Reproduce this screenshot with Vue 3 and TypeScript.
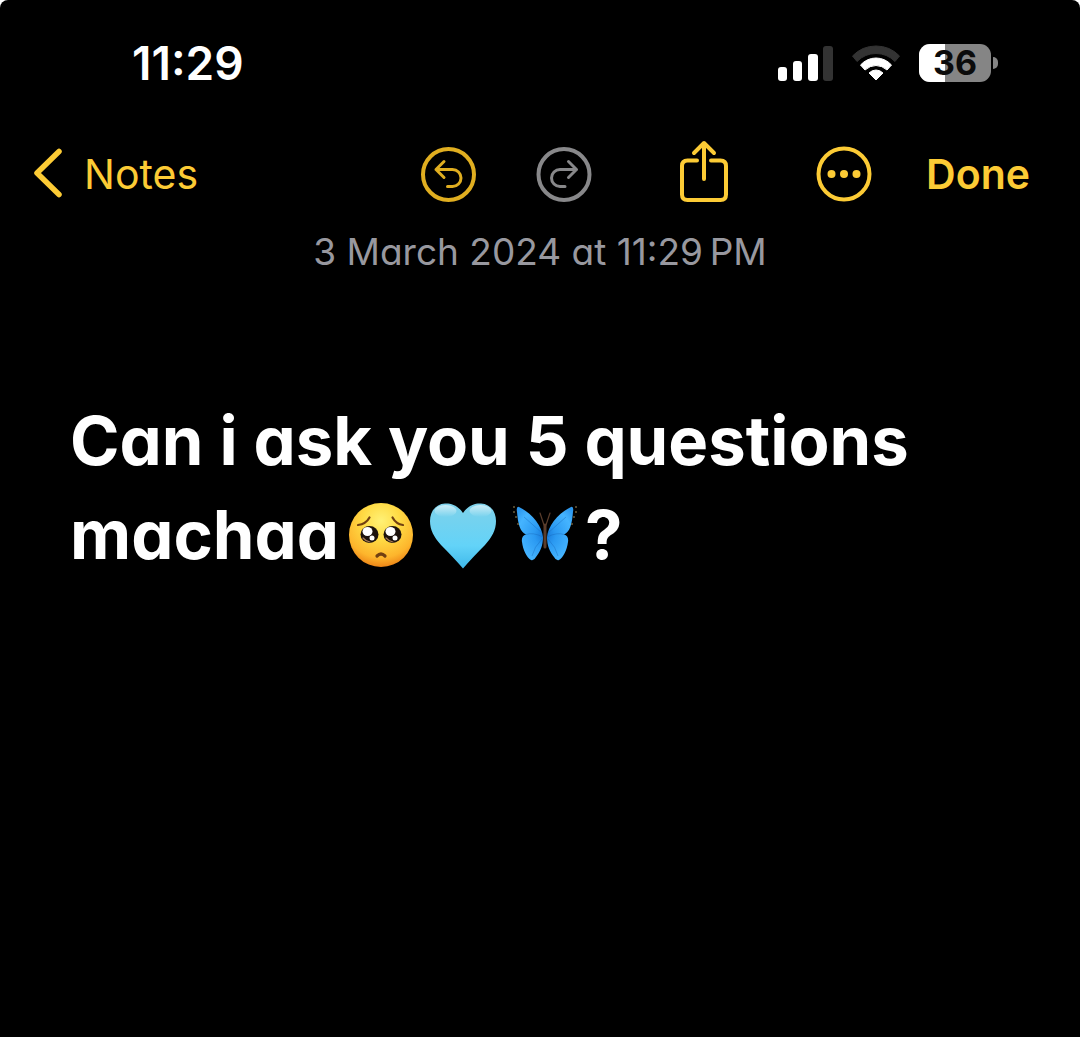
<script setup lang="ts">
import { ref } from 'vue'

const time = ref('11:29')
const battery = ref(36)
const edited = ref('3 March 2024 at 11:29\u2009PM')
</script>

<template>
  <main class="screen">
    <header class="status">
      <time class="clock">{{ time }}</time>
      <div class="indicators">
        <svg class="signal" width="56" height="38" viewBox="0 0 56 38" role="img" aria-label="Signal: 3 of 4 bars">
          <g fill="#fff">
            <rect x="1" y="23" width="9" height="14" rx="3" />
            <rect x="16" y="17" width="9" height="20" rx="3" />
            <rect x="31" y="10" width="10" height="27" rx="3" />
          </g>
          <rect x="46" y="2" width="10" height="35" rx="3" fill="#333" />
        </svg>
        <svg class="wifi" width="48" height="38" viewBox="0 0 48 38" role="img" aria-label="Wi-Fi">
          <path d="M0.500 12Q10 2 24 2T47.500 12L43 17.500Q35 9.500 24 9.500T5 17.500Z" fill="#333" stroke="#333" stroke-linejoin="round" />
          <path d="M8.500 21Q15 14 24 14T39.500 21L35 26Q30 21.500 24 21.500T13 26Z" fill="#fff" stroke="#fff" stroke-linejoin="round" />
          <path d="M17 29Q20 26 24 26T31 29L24 36Z" fill="#fff" stroke="#fff" stroke-linejoin="round" />
        </svg>
        <div class="battery" role="img" :aria-label="`Battery ${battery} percent`">
          <div class="cell">
            <div class="charge" :style="{ width: battery + '%' }"></div>
            <span class="level">{{ battery }}</span>
          </div>
          <div class="nub"></div>
        </div>
      </div>
    </header>

    <nav class="toolbar">
      <button class="back" type="button">
        <svg width="36" height="56" viewBox="0 0 36 56" aria-hidden="true">
          <path d="M27 5.500L5 27L27 48.500" fill="none" stroke="currentColor" stroke-width="5.500" stroke-linecap="round" stroke-linejoin="round" />
        </svg>
        <span>Notes</span>
      </button>
      <div class="actions">
        <div class="history">
          <button class="undo" type="button" aria-label="Undo">
            <svg class="line" width="56" height="56" viewBox="0 0 56 56">
              <circle cx="28.500" cy="28.500" r="25.500" />
              <path d="M24 15.500L16 23.500L24 31.500M16 23.500H32.500A8.500 8.500 0 0 1 32.500 40.500H27.500" stroke-width="3" />
            </svg>
          </button>
          <button class="redo" type="button" aria-label="Redo">
            <svg class="line" width="56" height="56" viewBox="0 0 56 56">
              <circle cx="28" cy="28.500" r="25.500" />
              <path d="M32.500 15.500L40.500 23.500L32.500 31.500M40.500 23.500H24A8.500 8.500 0 0 0 24 40.500H29" stroke-width="3" />
            </svg>
          </button>
        </div>
        <button type="button" aria-label="Share">
          <svg class="line" width="50" height="68" viewBox="0 0 50 68">
            <path d="M18 20.500H8.500Q3 20.500 3 26V54.500Q3 60 8.500 60H41.500Q47 60 47 54.500V26Q47 20.500 41.500 20.500H32M25 39V3M15 13L25 3L35 13" />
          </svg>
        </button>
        <div class="finish">
          <button type="button" aria-label="More">
            <svg class="line" width="56" height="56" viewBox="0 0 56 56">
              <circle cx="28" cy="28" r="25.500" />
              <g fill="currentColor" stroke="none">
                <circle cx="15.500" cy="28" r="4" />
                <circle cx="28" cy="28" r="4" />
                <circle cx="40.500" cy="28" r="4" />
              </g>
            </svg>
          </button>
          <button class="done" type="button">Done</button>
        </div>
      </div>
    </nav>

    <p class="date">{{ edited }}</p>

    <article class="note">
      <h1>
        Can i ask you 5 questions<br />machaa<svg class="emoji" viewBox="0 0 80 72" role="img" aria-label="Pleading face">
          <defs>
            <radialGradient id="skin" cx=".5" cy=".28" r=".72">
              <stop offset="0" stop-color="#fff176" />
              <stop offset=".4" stop-color="#ffdb45" />
              <stop offset=".8" stop-color="#fdb52c" />
              <stop offset="1" stop-color="#ed8517" />
            </radialGradient>
          </defs>
          <circle cx="41" cy="36" r="32" fill="url(#skin)" />
          <g fill="none" stroke="#714012" stroke-width="2.200" stroke-linecap="round">
            <path d="M18 26Q26 25 29.500 18.500" />
            <path d="M52.500 18.500Q56 25 63 26" />
            <path d="M37 57Q41 53 45 57" stroke-width="3.200" />
          </g>
          <g fill="#1c120c">
            <ellipse cx="29.500" cy="35.500" rx="9" ry="8.500" />
            <ellipse cx="52.500" cy="35.500" rx="9" ry="8.500" />
          </g>
          <g fill="#fff">
            <ellipse cx="27.500" cy="32.500" rx="5" ry="4.500" />
            <ellipse cx="50.500" cy="32.500" rx="5" ry="4.500" />
            <circle cx="32" cy="39" r="2.500" />
            <circle cx="55" cy="39" r="2.500" />
          </g>
          <g fill="none" stroke="#a77b58" stroke-width="1.200" stroke-linecap="round">
            <path d="M23 39Q26 42.500 30 43" />
            <path d="M46 39Q49 42.500 53 43" />
          </g>
        </svg><svg class="emoji" viewBox="0 0 80 72" role="img" aria-label="Light blue heart">
          <defs>
            <linearGradient id="heart" x1="0" y1="0" x2="0" y2="1">
              <stop offset="0" stop-color="#7fd2ea" />
              <stop offset=".3" stop-color="#72d2f0" />
              <stop offset=".65" stop-color="#63d3f8" />
              <stop offset="1" stop-color="#3fb9ea" />
            </linearGradient>
            <linearGradient id="gloss" x1="0" y1="0" x2="0" y2="1">
              <stop offset="0" stop-color="#fff" stop-opacity=".6" />
              <stop offset="1" stop-color="#fff" stop-opacity="0" />
            </linearGradient>
          </defs>
          <path d="M41 14C36 6 28 4 23 4.500C14 5 8 12 8 22C8 31 12 38 19 46Q32 59 41 69.500Q50 59 63 46C70 38 74 31 74 22C74 12 68 5 59 4.500C54 4 46 6 41 14Z" fill="url(#heart)" />
          <g fill="url(#gloss)">
            <ellipse cx="23.500" cy="12" rx="11" ry="6" />
            <ellipse cx="58.500" cy="12" rx="11" ry="6" />
          </g>
        </svg><svg class="emoji" viewBox="0 0 80 72" role="img" aria-label="Butterfly">
          <defs>
            <radialGradient id="wing" gradientUnits="userSpaceOnUse" cx="41" cy="36" r="36">
              <stop offset="0" stop-color="#1677d8" />
              <stop offset=".3" stop-color="#2b9af2" />
              <stop offset=".75" stop-color="#45b4ff" />
              <stop offset="1" stop-color="#2d98ee" />
            </radialGradient>
          </defs>
          <g fill="url(#wing)">
            <path d="M39 38C38 27 28 14 15 8Q12 7 13 13C14 25 16 33 22 35.500Q17 37 18 43C19 51 23 59 27 61Q30 62 32 58C36 53 39 47 39 38Z" />
            <path d="M43 38C44 27 54 14 67 8Q70 7 69 13C68 25 66 33 60 35.500Q65 37 64 43C63 51 59 59 55 61Q52 62 50 58C46 53 43 47 43 38Z" />
          </g>
          <path d="M39 38Q29 33 22 35.500M43 38Q53 33 60 35.500M38 34Q28 25 20 18M44 34Q54 25 62 18M38 40Q30 48 28 57M44 40Q52 48 54 57" fill="none" stroke="#1667b8" opacity=".4" />
          <g fill="none" stroke="#5a3d2c" stroke-linecap="round">
            <path d="M40 26L36 14M42 26L46 14" stroke-width="1.200" />
            <path d="M41 26V48" stroke-width="3" />
          </g>
          <g fill="#6b5c3b">
            <circle cx="10" cy="8" r="1" /><circle cx="10" cy="13" r="1" /><circle cx="12" cy="18" r="1" /><circle cx="14" cy="25" r="1" />
            <circle cx="72" cy="8" r="1" /><circle cx="72" cy="13" r="1" /><circle cx="70" cy="18" r="1" /><circle cx="68" cy="25" r="1" />
          </g>
        </svg>?
      </h1>
    </article>
  </main>
</template>

<style>
html {
  background: #fff;
}

body {
  margin: 0;
}
</style>

<style scoped>
.screen {
  box-sizing: border-box;
  min-height: 100vh;
  background: #000;
  border-radius: 8px 8px 0 0;
  color: #fff;
  font-family: Inter, Roboto, sans-serif;
}

.status {
  display: flex;
  justify-content: space-between;
  align-items: center;
  height: 126px;
  box-sizing: border-box;
  padding: 0 82px 0 132px;
}

.clock {
  font-size: 46px;
  line-height: 56px;
  font-weight: 600;
}

.indicators {
  display: flex;
  align-items: center;
  gap: 19px;
}

.signal,
.wifi,
.battery {
  flex: none;
}

.battery {
  display: flex;
  align-items: center;
  gap: 2px;
}

.cell {
  position: relative;
  display: flex;
  align-items: center;
  justify-content: center;
  width: 72px;
  height: 38px;
  border-radius: 11px;
  background: #858585;
}

.charge {
  position: absolute;
  inset: 0 auto 0 0;
  border-radius: 11px 0 0 11px;
  background: #fff;
}

.level {
  position: relative;
  color: #0b0b0b;
  font-size: 34px;
  line-height: 38px;
  font-weight: 700;
}

.nub {
  width: 5px;
  height: 12px;
  border-radius: 0 6px 6px 0;
  background: #858585;
}

.toolbar {
  display: flex;
  justify-content: space-between;
  align-items: center;
  height: 96px;
  padding: 0 50px 0 32px;
}

button {
  display: flex;
  align-items: center;
  flex: none;
  margin: 0;
  padding: 0;
  border: 0;
  background: none;
  color: #fccb35;
  font: inherit;
  cursor: pointer;
}

svg {
  display: block;
}

.line {
  fill: none;
  stroke: currentColor;
  stroke-width: 4;
  stroke-linecap: round;
  stroke-linejoin: round;
}

.back {
  gap: 16px;
  font-size: 41px;
  line-height: 56px;
}

.actions {
  display: flex;
  align-items: center;
  gap: 87px;
}

.history {
  display: flex;
  gap: 60px;
}

.undo {
  color: #e0ae20;
}

.redo {
  color: #88888a;
}

.finish {
  display: flex;
  align-items: center;
  gap: 54px;
}

.done {
  font-size: 41px;
  line-height: 56px;
  font-weight: 600;
}

.date {
  margin: 6px 0 0;
  color: #98989f;
  font-size: 37px;
  line-height: 48px;
  font-feature-settings: "cv11";
  text-align: center;
}

.note {
  padding: 118px 70px 64px;
}

h1 {
  margin: 0;
  font-size: 67px;
  line-height: 94px;
  font-weight: 700;
  font-feature-settings: "cv11";
}

.emoji {
  display: inline-block;
  width: 82px;
  height: 72px;
  vertical-align: -12px;
}
</style>
